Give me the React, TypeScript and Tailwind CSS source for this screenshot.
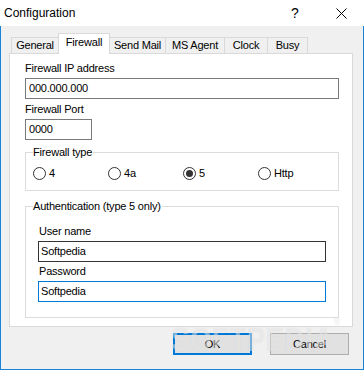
import React from 'react';

const tabs = [
  { name: 'General', w: 'w-[48px]' },
  { name: 'Firewall', w: 'w-[52px]', active: true },
  { name: 'Send Mail', w: 'w-[57px]' },
  { name: 'MS Agent', w: 'w-[60px]' },
  { name: 'Clock', w: 'w-[44px]' },
  { name: 'Busy', w: 'w-[41px]' },
];

const Radio = ({ label, checked }: { label: string; checked?: boolean }) => (
  <div className="w-[75px] flex items-center gap-[3px]">
    <span className="w-[13px] h-[13px] rounded-full border border-[#333333] bg-white flex items-center justify-center">
      {checked && <span className="w-[7px] h-[7px] rounded-full bg-[#333333]" />}
    </span>
    <span className="leading-[13px]">{label}</span>
  </div>
);

export default function App() {
  return (
    <div className="relative w-[364px] h-[370px] flex flex-col overflow-hidden text-black text-[11px] tracking-[-0.2px] font-['Liberation_Sans',Arial,sans-serif]">
      {/* title bar */}
      <div className="h-[26px] bg-white flex items-center">
        <span className="pl-[4px] text-[12px] tracking-normal">Configuration</span>
        <div className="ml-auto flex h-full">
          <div className="w-[46px] flex items-center justify-center text-[14px] tracking-normal">?</div>
          <div className="w-[46px] flex items-center justify-center">
            <svg width="11" height="11" viewBox="0 0 11 11">
              <path d="M0.5 0.5 L10.5 10.5 M10.5 0.5 L0.5 10.5" stroke="#000" strokeWidth="1" />
            </svg>
          </div>
        </div>
      </div>

      {/* body */}
      <div className="flex-1 bg-[#f0f0f0] border-x border-b border-[#1883d7] pl-[8px] pr-[10px] pt-[7px] flex flex-col">
        <div className="ml-[2px] h-[20px] flex items-end">
          {tabs.map((t, i) => (
            <div
              key={t.name}
              className={
                t.active
                  ? `${t.w} -ml-px h-[21px] -mb-px pb-[3px] bg-white border-t border-x border-[#d9d9d9] relative z-10 flex items-center justify-center`
                  : `${t.w} ${i > 0 ? '-ml-px' : ''} h-[16px] bg-[#f0f0f0] border-t border-x border-[#d9d9d9] flex items-center justify-center`
              }
            >
              {t.name}
            </div>
          ))}
        </div>

        <div className="bg-white border border-[#d9d9d9] pl-[15px] pr-[13px] pt-[8px] pb-[8px] flex flex-col">
          <div className="h-[13px] leading-[13px]">Firewall IP address</div>
          <div className="mt-[3px] h-[21px] border border-[#7a7a7a] flex items-center pl-[3px]">000.000.000</div>
          <div className="mt-[4px] h-[13px] leading-[13px]">Firewall Port</div>
          <div className="mt-[3px] w-[67px] h-[21px] border border-[#7a7a7a] flex items-center pl-[3px]">0000</div>

          <fieldset className="mt-[6px] border border-[#dcdcdc] pl-[7px] pt-[8px] pb-[10px]">
            <legend className="pr-[1px] leading-[13px]">Firewall type</legend>
            <div className="flex h-[13px]">
              <Radio label="4" />
              <Radio label="4a" />
              <Radio label="5" checked />
              <Radio label="Http" />
            </div>
          </fieldset>

          <fieldset className="mt-[9px] border border-[#dcdcdc] pl-[7px] pr-[12px] pt-[12px] pb-[15px]">
            <legend className="pr-[1px] leading-[13px]">Authentication (type 5 only)</legend>
            <div className="pl-[5px] flex flex-col">
              <div className="h-[13px] leading-[13px] pl-[1px]">User name</div>
              <div className="mt-[3px] h-[21px] border border-[#333333] flex items-center pl-[2px]">Softpedia</div>
              <div className="mt-[3px] h-[13px] leading-[13px] pl-[1px]">Password</div>
              <div className="mt-[3px] h-[21px] border border-[#0078d7] flex items-center pl-[2px]">Softpedia</div>
            </div>
          </fieldset>
        </div>

        <div className="mt-[6px] pr-[4px] flex justify-end gap-[18px]">
          <button className="w-[79px] h-[22px] bg-[#e1e1e1] border-2 border-[#0078d7] flex items-center justify-center">OK</button>
          <button className="w-[79px] h-[22px] bg-[#e1e1e1] border border-[#adadad] flex items-center justify-center">Cancel</button>
        </div>
      </div>

      {/* watermark */}
      <div
        aria-hidden="true"
        className="absolute left-[150px] top-[314px] pointer-events-none select-none text-[34px] font-bold tracking-[1px] text-white/40 scale-x-[0.8] [text-shadow:0_0_1px_rgba(160,160,160,0.25)]"
      >
        SOFTPEDIA<span className="text-[10px] align-top">®</span>
      </div>
    </div>
  );
}
